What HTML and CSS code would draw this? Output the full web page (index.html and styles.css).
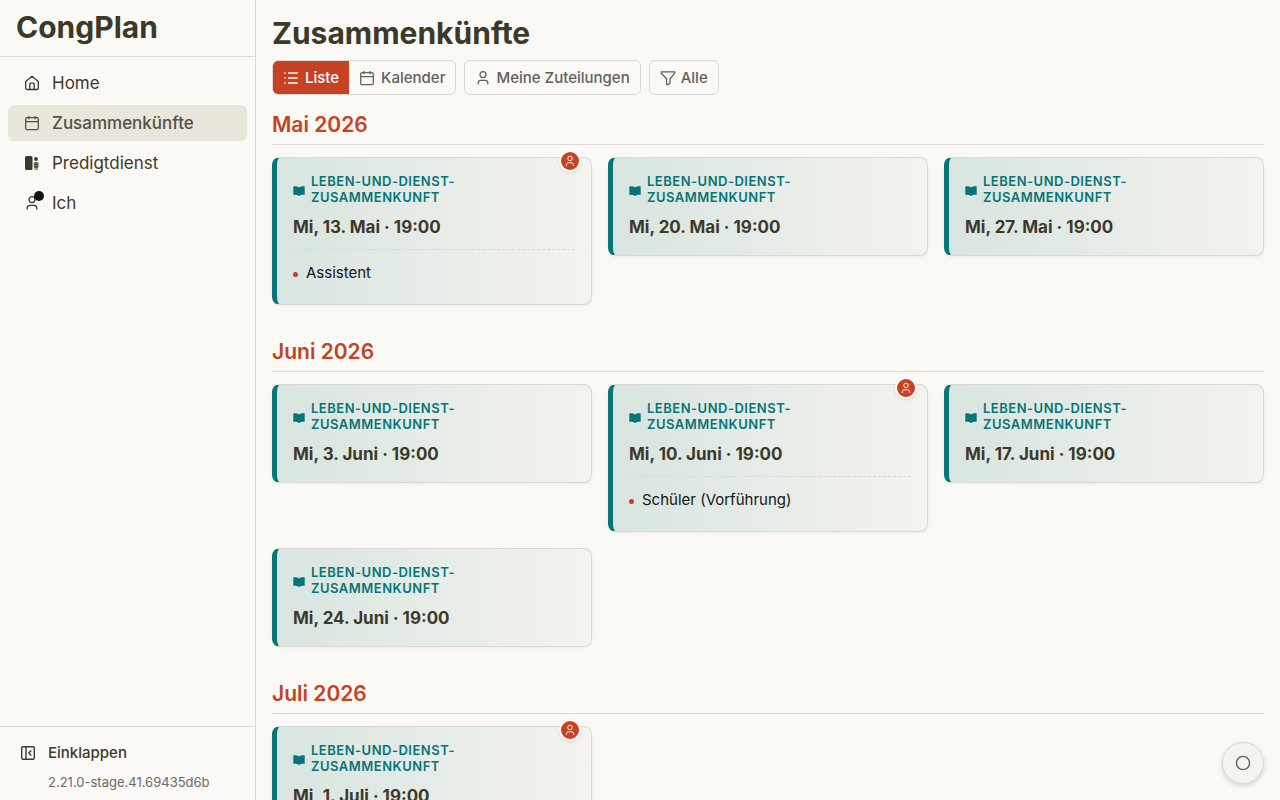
FILE: index.html
```html
<!doctype html>
<html lang="de">

<head>
  <meta charset="utf-8">
  <meta name="viewport" content="width=device-width, initial-scale=1">
  <title>CongPlan - Zusammenkünfte</title>
  <link rel="stylesheet" href="styles.css">
</head>

<body>

  <svg class="sprite" xmlns="http://www.w3.org/2000/svg">
    <symbol id="home" viewBox="0 0 16 16"><path d="M1.7 6.6 8 1.3l6.3 5.3v6.6c0 .8-.5 1.3-1.3 1.3H3c-.8 0-1.3-.5-1.3-1.3zM5.8 14.5V9.2c0-.6.4-1 1-1h2.4c.6 0 1 .4 1 1v5.3"/></symbol>
    <symbol id="calendar" viewBox="0 0 16 16"><rect x="1.7" y="2.7" width="12.6" height="12" rx="1.5"/><path d="M1.7 6.6h12.6M4.9 1v3.3M11.1 1v3.3"/></symbol>
    <symbol id="user" viewBox="0 0 16 16"><circle cx="8" cy="4.6" r="3"/><path d="M3.2 14.6v-1.5c0-1.7 1-2.7 2.7-2.7h4.2c1.7 0 2.7 1 2.7 2.7v1.5"/></symbol>
    <symbol id="list" viewBox="0 0 16 16"><path d="M5 3h9.7M5 8h9.7M5 13h9.7M1.3 3h1.3M1.3 8h1.3M1.3 13h1.3"/></symbol>
    <symbol id="filter" viewBox="0 0 16 16"><path d="M1.3 1.8h13.4v1.4L10 8.8v4.5L8.3 14.6H6.6V8.8L1.3 3.2z"/></symbol>
    <symbol id="book" viewBox="0 0 12 12"><path d="M.3 1.6C2.4 1 4.4 1.3 6 2.5 7.6 1.3 9.6 1 11.7 1.6v8.2c-2.1-.3-4 0-5.7 1.2C4.3 9.8 2.4 9.5.3 9.8z"/></symbol>
  </svg>

  <div class="app">
    <aside class="sidebar">
      <div class="brand">CongPlan</div>
      <nav class="nav">
        <a class="nav-item" href="#"><svg class="icon"><use href="#home"/></svg>Home</a>
        <a class="nav-item active" href="#" aria-current="page"><svg class="icon"><use href="#calendar"/></svg>Zusammenkünfte</a>
        <a class="nav-item" href="#">
          <svg class="icon icon-solid" viewBox="0 0 16 16">
            <rect x="1" y="1" width="7.5" height="14" rx="1.5"/>
            <circle cx="12" cy="4" r="1.9"/>
            <rect x="9.8" y="7" width="4.7" height="6" rx="1.5" opacity=".8"/>
            <rect x="10.5" y="12" width="3.4" height="3" opacity=".5"/>
          </svg>Predigtdienst
        </a>
        <a class="nav-item" href="#"><span class="icon-wrap"><svg class="icon"><use href="#user"/></svg><span class="dot"></span></span>Ich</a>
      </nav>
      <div class="sidebar-footer">
        <button class="collapse" type="button">
          <svg class="icon icon-bold" viewBox="0 0 16 16"><rect x="1.7" y="1.7" width="12.6" height="12.6" rx="1.2"/><path d="M6 1.7v12.6M11.3 5.5 8.8 8l2.5 2.5"/></svg>Einklappen
        </button>
        <div class="version">2.21.0-stage.41.69435d6b</div>
      </div>
    </aside>

    <main class="content">
      <h1>Zusammenkünfte</h1>

      <div class="toolbar">
        <div class="btn-group">
          <button class="btn selected" type="button"><svg class="icon"><use href="#list"/></svg>Liste</button>
          <button class="btn" type="button"><svg class="icon"><use href="#calendar"/></svg>Kalender</button>
        </div>
        <button class="btn btn-outline" type="button"><svg class="icon"><use href="#user"/></svg>Meine Zuteilungen</button>
        <button class="btn btn-outline" type="button"><svg class="icon"><use href="#filter"/></svg>Alle</button>
      </div>

      <section class="month">
        <h2>Mai 2026</h2>
        <div class="cards">
          <article class="card">
            <span class="badge"><svg><use href="#user"/></svg></span>
            <div class="card-type"><svg class="book"><use href="#book"/></svg><span>Leben-und-Dienst-Zusammenkunft</span></div>
            <div class="card-date">Mi, 13. Mai · 19:00</div>
            <ul class="tasks"><li>Assistent</li></ul>
          </article>
          <article class="card">
            <div class="card-type"><svg class="book"><use href="#book"/></svg><span>Leben-und-Dienst-Zusammenkunft</span></div>
            <div class="card-date">Mi, 20. Mai · 19:00</div>
          </article>
          <article class="card">
            <div class="card-type"><svg class="book"><use href="#book"/></svg><span>Leben-und-Dienst-Zusammenkunft</span></div>
            <div class="card-date">Mi, 27. Mai · 19:00</div>
          </article>
        </div>
      </section>

      <section class="month">
        <h2>Juni 2026</h2>
        <div class="cards">
          <article class="card">
            <div class="card-type"><svg class="book"><use href="#book"/></svg><span>Leben-und-Dienst-Zusammenkunft</span></div>
            <div class="card-date">Mi, 3. Juni · 19:00</div>
          </article>
          <article class="card">
            <span class="badge"><svg><use href="#user"/></svg></span>
            <div class="card-type"><svg class="book"><use href="#book"/></svg><span>Leben-und-Dienst-Zusammenkunft</span></div>
            <div class="card-date">Mi, 10. Juni · 19:00</div>
            <ul class="tasks"><li>Schüler (Vorführung)</li></ul>
          </article>
          <article class="card">
            <div class="card-type"><svg class="book"><use href="#book"/></svg><span>Leben-und-Dienst-Zusammenkunft</span></div>
            <div class="card-date">Mi, 17. Juni · 19:00</div>
          </article>
          <article class="card">
            <div class="card-type"><svg class="book"><use href="#book"/></svg><span>Leben-und-Dienst-Zusammenkunft</span></div>
            <div class="card-date">Mi, 24. Juni · 19:00</div>
          </article>
        </div>
      </section>

      <section class="month">
        <h2>Juli 2026</h2>
        <div class="cards">
          <article class="card">
            <span class="badge"><svg><use href="#user"/></svg></span>
            <div class="card-type"><svg class="book"><use href="#book"/></svg><span>Leben-und-Dienst-Zusammenkunft</span></div>
            <div class="card-date">Mi, 1. Juli · 19:00</div>
          </article>
        </div>
      </section>
    </main>
  </div>

  <button class="fab" type="button" aria-label="Status">
    <svg class="icon icon-bold" viewBox="0 0 16 16"><circle cx="8" cy="8" r="6.6"/></svg>
  </button>

</body>

</html>
```
FILE: styles.css
```css
* {
  box-sizing: border-box;
}

body {
  margin: 0;
  background: #faf9f5;
  color: #3d3929;
  font-family: Inter, "Liberation Sans", sans-serif;
  font-size: 15px;
}

button {
  font: inherit;
  color: inherit;
  background: none;
  border: 0;
  padding: 0;
  cursor: pointer;
}

.sprite {
  display: none;
}

.icon {
  width: 16px;
  height: 16px;
  flex: none;
  display: block;
}

.icon,
.badge svg {
  fill: none;
  stroke: currentColor;
  stroke-width: 1.3;
  stroke-linejoin: round;
}

.icon-solid {
  fill: currentColor;
  stroke: none;
}

.icon-bold {
  stroke-width: 1.4;
}

.app {
  display: flex;
  height: 100vh;
}

/* sidebar */

.sidebar {
  width: 256px;
  flex: none;
  display: flex;
  flex-direction: column;
  border-right: 1px solid #dad9d4;
}

.brand {
  padding: 8px 16px 10px;
  border-bottom: 1px solid #dad9d4;
  font-size: 30px;
  font-weight: 700;
  line-height: 38px;
}

.nav {
  flex: 1;
  display: flex;
  flex-direction: column;
  gap: 4px;
  padding: 8px;
}

.nav-item {
  display: flex;
  align-items: center;
  gap: 12px;
  height: 36px;
  padding: 0 16px;
  border-radius: 6px;
  color: #3d3929;
  font-size: 17px;
  text-decoration: none;
}

.nav-item.active {
  background: #e9e6dc;
  color: #535146;
  font-weight: 500;
}

.icon-wrap {
  position: relative;
}

.dot {
  position: absolute;
  top: -4px;
  right: -4px;
  width: 10px;
  height: 10px;
  border-radius: 50%;
  background: #141413;
}

.sidebar-footer {
  padding: 16px 20px 8px;
  border-top: 1px solid #dad9d4;
}

.collapse {
  display: flex;
  align-items: center;
  gap: 12px;
  font-weight: 500;
  line-height: 20px;
}

.version {
  margin-top: 9px;
  padding-left: 28px;
  color: #6b6a65;
  font-size: 13px;
  line-height: 20px;
}

/* content */

.content {
  flex: 1;
  min-width: 0;
  padding: 12px 16px;
  overflow-y: auto;
  scrollbar-width: none;
}

h1 {
  margin: 0 0 6px;
  font-size: 30px;
  font-weight: 700;
  line-height: 42px;
}

.toolbar {
  display: flex;
  flex-wrap: wrap;
  gap: 8px;
  margin-bottom: 15px;
}

.btn-group {
  display: flex;
  border: 1px solid #dad9d4;
  border-radius: 6px;
  overflow: hidden;
}

.btn {
  display: flex;
  align-items: center;
  gap: 6px;
  height: 33px;
  padding: 0 10px;
  color: #62615c;
  font-weight: 500;
  line-height: 21px;
}

.btn.selected {
  background: #c54223;
  color: #fff;
}

.btn-outline {
  gap: 5px;
  height: 35px;
  border: 1px solid #dad9d4;
  border-radius: 6px;
}

.month {
  margin-bottom: 32px;
}

h2 {
  margin: 0 0 12px;
  padding-bottom: 4px;
  border-bottom: 1px solid #dad9d4;
  color: #c54223;
  font-size: 21px;
  font-weight: 600;
  line-height: 30px;
}

.cards {
  display: grid;
  grid-template-columns: repeat(auto-fill, minmax(300px, 1fr));
  align-items: start;
  gap: 16px;
}

.card {
  position: relative;
  padding: 15px 16px;
  border: 1px solid #dad9d4;
  border-left: 5px solid #087477;
  border-radius: 8px;
  background: linear-gradient(90deg, #d8e5e0, #f4f3ee);
  box-shadow: 0 1px 3px rgba(0, 0, 0, 0.06);
}

.card-type {
  display: flex;
  align-items: center;
  gap: 6px;
  color: #087477;
  font-size: 13px;
  font-weight: 600;
  letter-spacing: 0.5px;
  line-height: 16px;
  text-transform: uppercase;
}

.book {
  width: 12px;
  height: 12px;
  flex: none;
  margin-top: 4px;
  fill: currentColor;
}

.card-date {
  margin-top: 10px;
  font-size: 17px;
  font-weight: 700;
  line-height: 25px;
}

.tasks {
  list-style: none;
  margin: 9px 0 0;
  padding: 13px 0 6px;
  border-top: 1px dashed #dad9d4;
  color: #141413;
  line-height: 20px;
}

.tasks li {
  display: flex;
  align-items: center;
  gap: 8px;
}

.tasks li:before {
  content: "";
  width: 5px;
  height: 5px;
  margin-top: 3px;
  border-radius: 50%;
  background: #c54223;
}

.badge {
  position: absolute;
  top: -8px;
  right: 10px;
  display: flex;
  align-items: center;
  justify-content: center;
  width: 22px;
  height: 22px;
  border: 2px solid #faf9f5;
  border-radius: 50%;
  background: #c54223;
  color: #fff;
  box-shadow: 0 1px 3px rgba(0, 0, 0, 0.1);
}

.badge svg {
  width: 12px;
  height: 12px;
}

.fab {
  position: fixed;
  right: 16px;
  bottom: 16px;
  display: flex;
  align-items: center;
  justify-content: center;
  width: 42px;
  height: 42px;
  border: 1px solid #dad9d4;
  border-radius: 50%;
  background: #f4f3ee;
  color: #62615c;
  box-shadow: 0 2px 5px rgba(0, 0, 0, 0.15);
}
```
